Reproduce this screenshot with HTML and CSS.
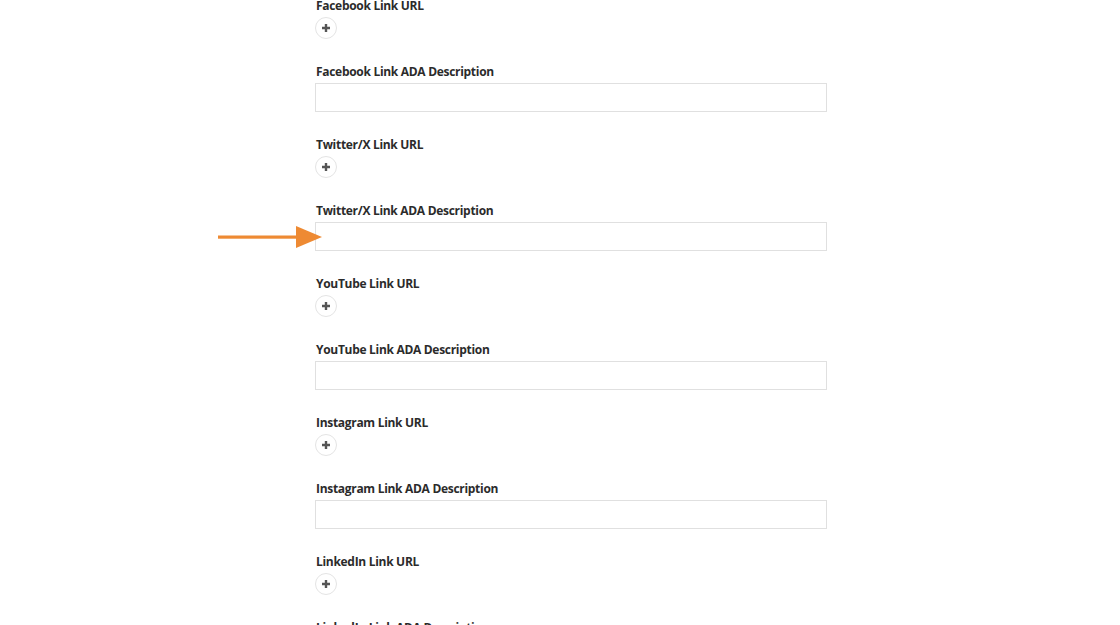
FILE: index.html
```html
<!DOCTYPE html>
<html>
<head>
<meta charset="utf-8">
<link rel="stylesheet" href="styles.css">
</head>
<body>
<div class="form">
  <div class="field">
    <label class="label">Facebook Link URL</label>
    <button class="add" type="button" aria-label="Add"><svg viewBox="0 0 10 10" width="10" height="10"><path d="M5 1v8M1 5h8" stroke="#555" stroke-width="2.4"/></svg></button>
  </div>
  <div class="field">
    <label class="label">Facebook Link ADA Description</label>
    <input class="input" type="text">
  </div>
  <div class="field">
    <label class="label">Twitter/X Link URL</label>
    <button class="add" type="button" aria-label="Add"><svg viewBox="0 0 10 10" width="10" height="10"><path d="M5 1v8M1 5h8" stroke="#555" stroke-width="2.4"/></svg></button>
  </div>
  <div class="field marked">
    <label class="label">Twitter/X Link ADA Description</label>
    <input class="input" type="text">
    <svg class="arrow" width="106" height="24" viewBox="0 0 106 24"><rect x="0" y="10.5" width="82" height="3.2" fill="#EE8A33"/><path d="M78 1 L104 12 L78 23 Z" fill="#EE8A33"/></svg>
  </div>
  <div class="field">
    <label class="label">YouTube Link URL</label>
    <button class="add" type="button" aria-label="Add"><svg viewBox="0 0 10 10" width="10" height="10"><path d="M5 1v8M1 5h8" stroke="#555" stroke-width="2.4"/></svg></button>
  </div>
  <div class="field">
    <label class="label">YouTube Link ADA Description</label>
    <input class="input" type="text">
  </div>
  <div class="field">
    <label class="label">Instagram Link URL</label>
    <button class="add" type="button" aria-label="Add"><svg viewBox="0 0 10 10" width="10" height="10"><path d="M5 1v8M1 5h8" stroke="#555" stroke-width="2.4"/></svg></button>
  </div>
  <div class="field">
    <label class="label">Instagram Link ADA Description</label>
    <input class="input" type="text">
  </div>
  <div class="field">
    <label class="label">LinkedIn Link URL</label>
    <button class="add" type="button" aria-label="Add"><svg viewBox="0 0 10 10" width="10" height="10"><path d="M5 1v8M1 5h8" stroke="#555" stroke-width="2.4"/></svg></button>
  </div>
  <div class="field">
    <label class="label">LinkedIn Link ADA Description</label>
    <input class="input" type="text">
  </div>
</div>
</body>
</html>
```
FILE: styles.css
```css
html, body {
  margin: 0;
  padding: 0;
  background: #fff;
  overflow: hidden;
}
body {
  font-family: "Open Sans", "Liberation Sans", sans-serif;
  color: #333;
}
.form {
  width: 512px;
  margin: -4px 0 0 315px;
  display: flex;
  flex-direction: column;
}
.field {
  display: flex;
  flex-direction: column;
  align-items: flex-start;
  gap: 1px;
  margin-bottom: 23px;
  position: relative;
}
.label {
  display: block;
  font-size: 12px;
  font-weight: 700;
  letter-spacing: -0.3px;
  line-height: 20px;
  padding-left: 1px;
  color: #2b2b2b;
}
.add {
  width: 22px;
  height: 22px;
  padding: 0;
  border: 1px solid #e4e4e4;
  border-radius: 50%;
  background: #fff;
  display: flex;
  align-items: center;
  justify-content: center;
}
.add svg { display: block; }
.input {
  box-sizing: border-box;
  width: 512px;
  height: 29px;
  border: 1px solid #e0e0e0;
  border-radius: 0;
  margin: 0;
  padding: 0 8px;
  background: #fff;
}
.arrow {
  position: absolute;
  left: -97px;
  top: 24px;
}
```
